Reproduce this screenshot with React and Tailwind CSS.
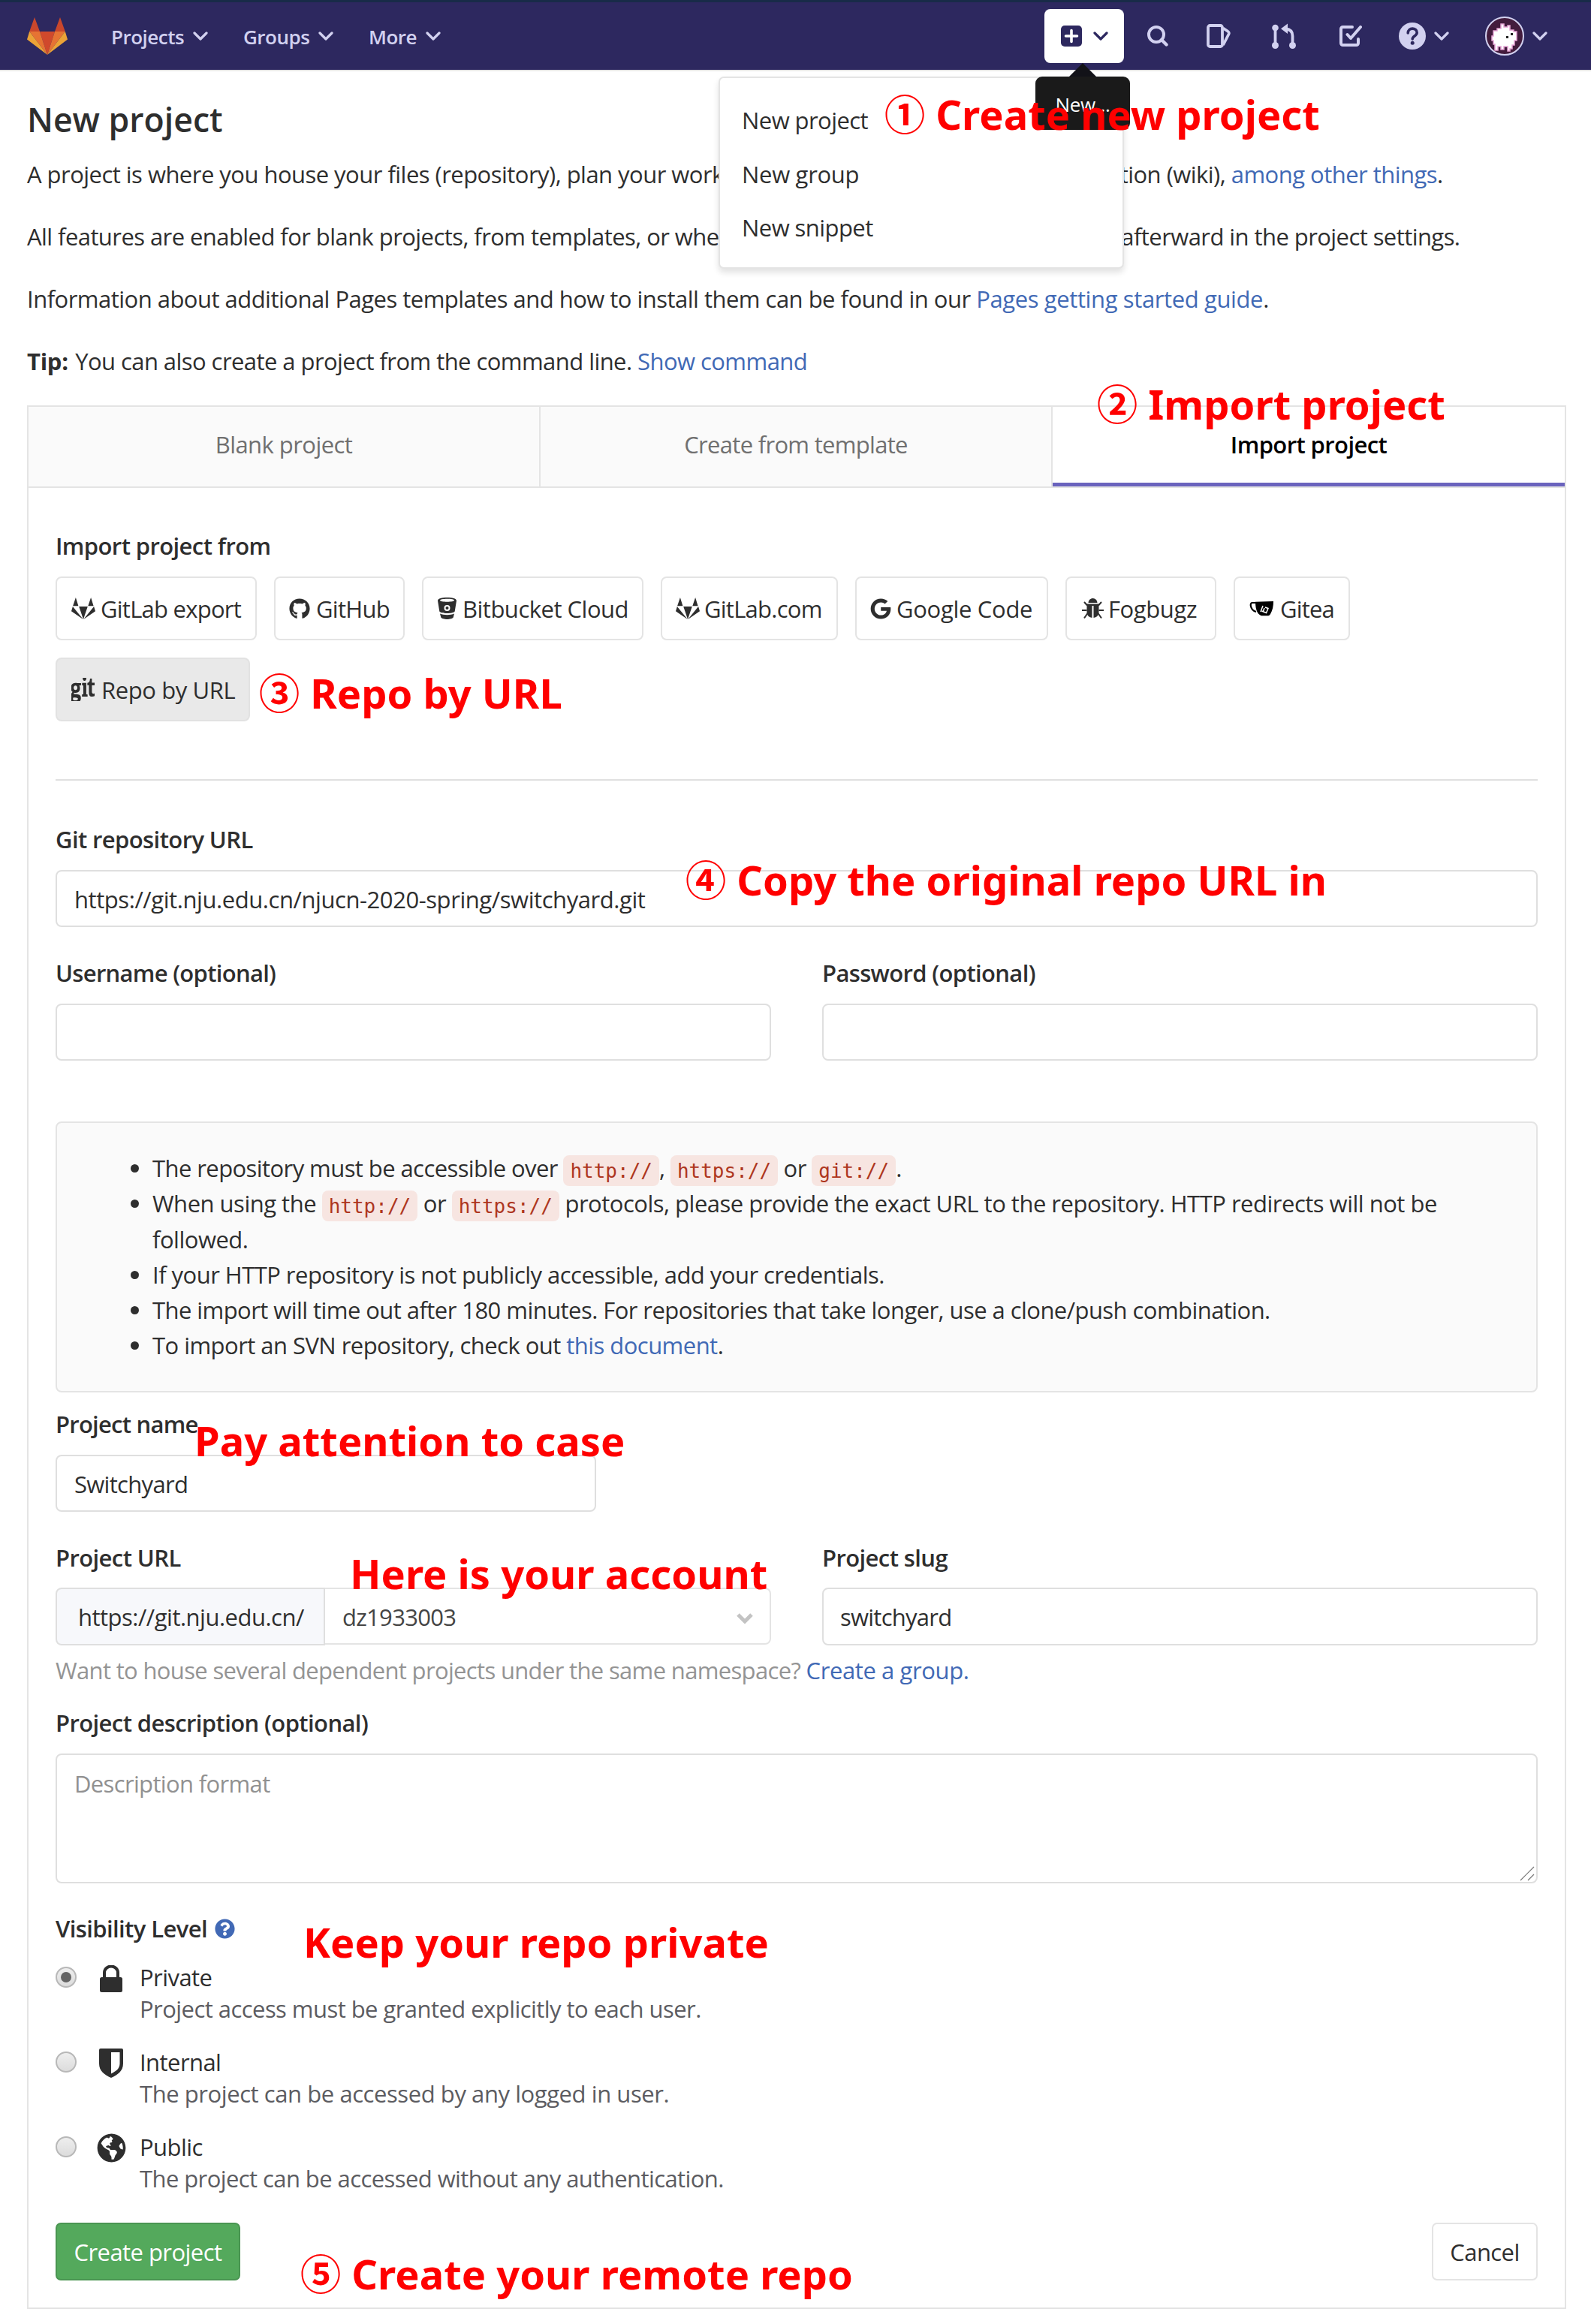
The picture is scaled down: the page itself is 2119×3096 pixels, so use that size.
import React from "react";
import { FaGithub, FaGoogle, FaGit, FaGlobeAmericas, FaQuestionCircle } from "react-icons/fa";

const Chevron = ({ className = "" }) => (
  <svg viewBox="0 0 20 12" fill="none" stroke="currentColor" strokeWidth="3.2" strokeLinecap="round" strokeLinejoin="round" className={`h-3 w-5 shrink-0 ${className}`}>
    <path d="M2 2l8 8 8-8" />
  </svg>
);

const Tanuki = () => (
  <svg viewBox="0 0 54 50" className="h-[50px] w-[54px] shrink-0">
    <path fill="#c9472c" d="M10 0L3.2 19H17zM44 0l6.800 19H37z" />
    <path fill="#d0492c" d="M17 19h20L27 50z" />
    <path fill="#e67333" d="M3.2 19H17l10 31zM50.800 19H37L27 50z" />
    <path fill="#eba337" d="M3.2 19L0 29.500 27 50zM50.800 19L54 29.500 27 50z" />
  </svg>
);

const GitlabMono = () => (
  <svg viewBox="0 0 32 29" fill="currentColor" className="h-[29px] w-8">
    <path d="M5.900 0L9.400 11.300H2.100zM26.100 0l3.500 11.300h-7.300zM10.200 12h11.600L16 29z" />
    <path d="M1.900 12L0 18.200 15.700 29zM30.100 12L32 18.200 16.300 29z" />
  </svg>
);

const Bucket = () => (
  <svg viewBox="0 0 25 29" fill="currentColor" className="h-[29px] w-[25px]">
    <path fillRule="evenodd" d="M12.500 0C19 0 25 1.300 25 4.200L22.700 18.500c-1 1.600-5 2.500-10.200 2.500s-9.200-.9-10.200-2.500L0 4.200C0 1.300 6 0 12.500 0zM12.500 1.800c-5 0-9.500.8-9.500 2s4.500 2 9.500 2 9.500-.8 9.500-2-4.500-2-9.500-2zM12.500 10a4 4 0 100 8 4 4 0 000-8z" />
    <circle cx="12.500" cy="14" r="2" />
    <path d="M3 21.500c5 2.200 14 2.200 19 0l-1.300 5c-1.800 3.300-14.600 3.300-16.400 0z" />
  </svg>
);

const Bug = () => (
  <svg viewBox="0 0 29 28" fill="none" stroke="currentColor" strokeWidth="2" className="h-7 w-[29px]">
    <path fill="currentColor" stroke="none" d="M8.500 6a6 6 0 0112 0zM6.500 7.500h16V19a8 8 0 01-7 7V10h-2v16a8 8 0 01-7-7z" />
    <path d="M7 9.500L3 5M22 9.500L26 5M6.500 16H0M22.500 16H29M7.500 20L3 26.500M21.500 20l4.500 6.500" />
  </svg>
);

const TeaCup = () => (
  <svg viewBox="0 0 32 20" className="h-5 w-8 text-black">
    <path d="M10 2H4C0 1.500 1 12 9 14" fill="none" stroke="currentColor" strokeWidth="2.200" />
    <path fill="currentColor" d="M8 .8L32 0c0 6-1 12-4 17-1.300 2.200-2.500 2.200-4 2.200h-8c-4-1-8-6-8-18.400z" />
    <path d="M18 6l-3 8M21 8l4 1.500-2.500 6-6-2.500M20 9l-1.500 4" fill="none" stroke="#fff" strokeWidth="1.500" />
  </svg>
);

const Lock = () => (
  <svg viewBox="0 0 30 36" className="h-9 w-[30px]">
    <path d="M6 18v-8a9 8.500 0 0118 0v8" fill="none" stroke="currentColor" strokeWidth="4" />
    <rect y="16" width="30" height="20" rx="2.500" fill="currentColor" />
  </svg>
);

const Shield = () => (
  <svg viewBox="0 0 32 39" className="h-[39px] w-8">
    <path fillRule="evenodd" fill="currentColor" d="M2 0h28q2 0 2 2v18c0 10-7 15-16 19C7 35 0 30 0 20V2q0-2 2-2zM16 5v28.500c7-3.500 11.500-7 11.500-13.500V5z" />
  </svg>
);

const SOURCES = [
  { icon: <GitlabMono />, label: "GitLab export", box: "w-[268px] pl-[19px]", slot: "w-[39px]", text: "tracking-[-0.75px]" },
  { icon: <FaGithub className="h-[28px] w-[28px]" />, label: "GitHub", box: "w-[174px] pl-[18px]", slot: "w-[36px]", text: "tracking-[-0.7px]" },
  { icon: <Bucket />, label: "Bitbucket Cloud", box: "w-[295px] pl-[19px]", slot: "w-[33px]", text: "tracking-[-0.5px]" },
  { icon: <GitlabMono />, label: "GitLab.com", box: "w-[236px] pl-[18px]", slot: "w-[38px]", text: "tracking-[-0.75px]" },
  { icon: <FaGoogle className="h-[28px] w-[28px]" />, label: "Google Code", box: "w-[257px] pl-[18px]", slot: "w-[35px]", text: "tracking-[-0.3px]" },
  { icon: <Bug />, label: "Fogbugz", box: "w-[201px] pl-[20px]", slot: "w-[35px]", text: "tracking-[-0.4px]" },
  { icon: <TeaCup />, label: "Gitea", box: "w-[155px] pl-[19px]", slot: "w-[41px]", text: "tracking-[-0.8px]" },
];

const LEVELS = [
  { name: "Private", text: "Project access must be granted explicitly to each user.", fit: "tracking-[-0.55px]", icon: <Lock />, on: true },
  { name: "Internal", text: "The project can be accessed by any logged in user.", fit: "tracking-[-0.43px]", icon: <Shield /> },
  { name: "Public", text: "The project can be accessed without any authentication.", fit: "tracking-[-0.58px]", icon: <FaGlobeAmericas className="h-[39px] w-[39px]" /> },
];

const Label = ({ children, className = "" }) => (
  <div className={`flex h-[47px] items-center pt-[2px] font-semibold tracking-[-0.6px] ${className}`}>{children}</div>
);
const Field = ({ children, className = "" }) => (
  <div className={`flex h-[76px] items-center rounded-[8px] border-2 border-[#dfdfdf] bg-white px-[23px] pt-[2px] ${className}`}>{children}</div>
);
const Link = ({ children, className = "" }) => <span className={`text-[#4169b5] ${className}`}>{children}</span>;
const Code = ({ children }) => (
  <code className="rounded-[8px] bg-[#f7e5e1] px-[9px] py-[5.5px] font-['DejaVu_Sans_Mono',monospace] text-[26px] leading-none tracking-normal text-[#ae3620]">{children}</code>
);
const Note = ({ num, children, className }) => (
  <div className={`absolute z-30 flex items-baseline whitespace-pre font-['Noto_Sans',sans-serif] text-[54.2px] leading-[54px] font-bold tracking-[0.04px] text-[#ff0000] ${className}`}>
    {num && <span className="mr-[14px] font-['Noto_Sans_CJK_SC',sans-serif]">{num}</span>}
    <span>{children}</span>
  </div>
);

function Header() {
  return (
    <header className="flex h-[95px] items-center border-t-[3px] border-b-2 border-t-[#182b48] border-b-[#e5e5e5] bg-[#2d285f] pr-[58px] pl-9 text-[26px] font-semibold tracking-[-0.5px] text-[#d2d1f0]">
      <Tanuki />
      <span className="ml-[58px] w-[101px] pt-[2px]">Projects</span>
      <Chevron className="ml-[8px]" />
      <span className="ml-[47px] w-[92px] pt-[2px]">Groups</span>
      <Chevron className="ml-[8px]" />
      <span className="ml-[47px] w-[68px] pt-[2px]">More</span>
      <Chevron className="ml-[8px]" />

      <div className="ml-auto flex items-center">
        <div className="relative flex h-[72px] w-[106px] items-center rounded-[8px] bg-white pl-[22px] text-[#2d285f]">
          <svg viewBox="0 0 28 28" className="h-7 w-7">
            <rect width="28" height="28" rx="5" fill="currentColor" />
            <path d="M14 6.500v15M6.500 14h15" stroke="#fff" strokeWidth="3.600" strokeLinecap="round" />
          </svg>
          <Chevron className="ml-[15px]" />
        </div>
        <svg viewBox="0 0 28 28" fill="none" stroke="currentColor" strokeWidth="4" className="ml-[31px] h-7 w-7">
          <circle cx="12" cy="12" r="10" />
          <path d="M19 19l6.500 6.500" strokeLinecap="round" strokeWidth="4.400" />
        </svg>
        <svg viewBox="0 0 32 32" fill="none" stroke="currentColor" strokeWidth="3.800" strokeLinejoin="round" className="ml-[51px] h-8 w-8">
          <rect x="2" y="2" width="19" height="28" rx="2.500" />
          <path d="M22 5.500l6 4c1.800 1.200 2.200 2.500 1.500 4L22 28" />
        </svg>
        <svg viewBox="0 0 32 34" fill="none" stroke="currentColor" strokeWidth="3.800" className="ml-[55px] h-[34px] w-8">
          <path d="M4.500 6v24M27.500 29V17c0-6-3-9-9-9.500" />
          <circle cx="4.500" cy="6" r="4.300" fill="currentColor" stroke="none" />
          <circle cx="4.500" cy="29.500" r="4.500" fill="currentColor" stroke="none" />
          <circle cx="27.500" cy="29.500" r="4.500" fill="currentColor" stroke="none" />
          <path d="M21 .5v13.500L12 7.200z" fill="currentColor" stroke="none" />
        </svg>
        <svg viewBox="0 0 30 28" fill="none" stroke="currentColor" strokeWidth="4" strokeLinecap="round" strokeLinejoin="round" className="ml-[58px] h-7 w-[30px]">
          <path d="M17 2H4.500A2.500 2.500 0 002 4.500v19A2.500 2.500 0 004.500 26h18a2.500 2.500 0 002.500-2.500V18" />
          <path d="M10.500 12l4.500 5L28 2" />
        </svg>
        <svg viewBox="0 0 36 36" fill="none" className="ml-[49px] h-9 w-9">
          <circle cx="18" cy="18" r="18" fill="currentColor" />
          <path d="M12.200 14c0-8 12-7.500 12-.5 0 4.500-6 4.500-6 8.500" stroke="#2d285f" strokeWidth="3.600" strokeLinecap="round" />
          <circle cx="18.200" cy="27.200" r="2.500" fill="#2d285f" />
        </svg>
        <Chevron className="ml-[11px]" />
        <svg viewBox="0 0 52 52" className="ml-[48px] h-[52px] w-[52px]">
          <circle cx="26" cy="26" r="25" fill="#431c3d" stroke="#d2d1f0" strokeWidth="2" />
          <path d="M11 19h5v-3h5v-6h4v4h5v-2h3v6h5v2h4v12h-3v6h-3v5h-3v3h-3v-6h-5v4h-4v-4h-4v5h-4v-8h-2v-5h-2v-6h2z" fill="#fff" stroke="#e7a5d6" strokeWidth="1.500" />
          <path d="M34 22h3v3h-3zM28 26h3v3h-3z" fill="#222" />
        </svg>
        <Chevron className="ml-[11px]" />
      </div>
    </header>
  );
}

function NewMenu() {
  return (
    <>
      <div className="absolute top-[102px] left-[957px] z-10 flex h-[256px] w-[540px] flex-col rounded-[7px] border-2 border-[#e4e4e4] bg-white pt-[21px] pl-[29px] shadow-[0_5px_9px_rgba(0,0,0,0.12)]">
        <div className="flex h-[71.6px] items-center">New project</div>
        <div className="flex h-[71.6px] items-center tracking-[-0.3px]">New group</div>
        <div className="flex h-[71.6px] items-center">New snippet</div>
      </div>
      <div className="absolute top-[84px] left-[1379px] z-20 flex flex-col items-center">
        <svg viewBox="0 0 36 18" className="h-[18px] w-9 text-[#121218]"><path d="M18 0l18 18H0z" fill="currentColor" /></svg>
        <div className="flex h-[71px] w-[126px] items-center justify-center rounded-[9px] bg-[#1a1a1a] pt-[3px] text-[26px] tracking-[-0.3px] text-white">New...</div>
      </div>
    </>
  );
}

export default function App() {
  return (
    <div className="relative h-[3096px] w-[2119px] overflow-hidden bg-white font-['Open_Sans',sans-serif] text-[31px] leading-[47px] tracking-[-0.56px] whitespace-nowrap text-[#2e2e2e]">
      <Header />
      <NewMenu />

      <section className="h-[445px] px-9 pt-[34px]">
        <h1 className="h-[80px] text-[44.6px] leading-[60px] font-semibold tracking-normal">New project</h1>
        <p className="mb-[36px] tracking-[-0.53px]">A project is where you house your files (repository), plan your work (issues), and publish your documentation (wiki), <Link>among other things</Link>.</p>
        <p className="mb-[36px] tracking-[-0.57px]">All features are enabled for blank projects, from templates, or when importing, but you can disable them afterward in the project settings.</p>
        <p className="mb-[36px] tracking-[-0.52px]">Information about additional Pages templates and how to install them can be found in our <Link className="tracking-[-0.38px]">Pages getting started guide</Link>.</p>
        <p className="tracking-[-0.56px]"><b className="mr-[2px] tracking-[-0.3px]">Tip:</b> You can also create a project from the command line. <Link>Show command</Link></p>
      </section>

      <main className="mr-[33px] ml-9 border-2 border-[#e4e4e4]">
        <div className="grid h-[108px] grid-cols-3 border-b-2 border-[#e4e4e4] text-[#707070]">
          <div className="flex items-center justify-center border-r-2 border-[#e4e4e4] bg-[#fafafa] pb-[5px]">Blank project</div>
          <div className="flex items-center justify-center border-r-2 border-[#e4e4e4] bg-[#fafafa] pb-[5px] tracking-[-0.7px]">Create from template</div>
          <div className="flex items-center justify-center border-b-[5px] border-[#6a63bd] font-semibold tracking-[-0.6px] text-black">Import project</div>
        </div>

        <div className="flex flex-col px-9 pt-[53px] pb-[36px]">
          <Label>Import project from</Label>
          <div className="mt-[18px] flex flex-wrap gap-[23px]">
            {SOURCES.map((s) => (
              <div key={s.label} className={`flex h-[85px] items-center rounded-[8px] border-2 border-[#e4e4e4] ${s.box}`}>
                <span className={`flex shrink-0 ${s.slot}`}>{s.icon}</span>
                <span className={`pt-[2px] ${s.text}`}>{s.label}</span>
              </div>
            ))}
            <div className="flex h-[85px] w-[259px] items-center rounded-[8px] border-2 border-[#e2e2e2] bg-[#e9e9e9] pl-[19px]">
              <span className="w-[40px] shrink-0"><FaGit preserveAspectRatio="none" viewBox="16 76 480 360" className="mb-[1px] h-[31px] w-[31px]" /></span>
              <span className="pt-[2px] tracking-[-0.4px]">Repo by URL</span>
            </div>
          </div>

          <div className="mt-[77px] h-[2px] bg-[#e0e0e0]" />

          <Label className="mt-[54px]">Git repository URL</Label>
          <Field className="mt-[18px] tracking-[-0.43px]">https://git.nju.edu.cn/njucn-2020-spring/switchyard.git</Field>

          <div className="mt-[37px] grid grid-cols-2 gap-x-[68px] gap-y-[18px]">
            <Label><span className="tracking-[-0.7px]">Username (optional)</span></Label>
            <Label><span className="tracking-[-0.65px]">Password (optional)</span></Label>
            <Field />
            <Field />
          </div>

          <div className="mt-[81px] h-[361px] rounded-[8px] border-2 border-[#e4e4e4] bg-[#fafafa] pt-[37px]">
            <ul className="list-disc pl-[127px] leading-[47.3px] tracking-[-0.58px]">
              <li>The repository must be accessible over <Code>http://</Code>, <Code>https://</Code> or <Code>git://</Code>.</li>
              <li className="tracking-[-0.5px]">When using the <Code>http://</Code> or <Code>https://</Code> protocols, please provide the exact URL to the repository. HTTP redirects will not be<br />followed.</li>
              <li className="tracking-[-0.53px]">If your HTTP repository is not publicly accessible, add your credentials.</li>
              <li className="tracking-[-0.56px]">The import will time out after 180 minutes. For repositories that take longer, use a clone/push combination.</li>
              <li className="tracking-[-0.54px]">To import an SVN repository, check out <Link>this document</Link>.</li>
            </ul>
          </div>

          <Label className="mt-[18px]"><span className="tracking-[-0.75px]">Project name</span></Label>
          <Field className="mt-[18px] w-[720px]"><span className="tracking-[-0.7px]">Switchyard</span></Field>

          <div className="mt-[37px] grid grid-cols-2 gap-x-[68px] gap-y-[17px]">
            <Label>Project URL</Label>
            <Label>Project slug</Label>
            <div className="flex h-[77px]">
              <div className="flex w-[359px] items-center rounded-l-[8px] border-2 border-[#dfdfdf] bg-[#f7f8fb] pt-[2px] pl-[28px] tracking-[-0.5px]">https://git.nju.edu.cn/</div>
              <div className="flex h-[76px] flex-1 items-center justify-between rounded-r-[8px] border-2 border-l-0 border-[#e4e4e4] pt-[2px] pr-[22px] pl-[23px] tracking-[-0.7px] text-[#454545]">
                dz1933003
                <svg viewBox="0 0 22 14" fill="none" stroke="#c3c3c3" strokeWidth="5" className="mt-[4px] h-[14px] w-[22px]"><path d="M2 2l9 9 9-9" /></svg>
              </div>
            </div>
            <Field className="min-h-[77px]"><span className="-ml-px tracking-[-0.75px]">switchyard</span></Field>
          </div>
          <div className="mt-[10px] tracking-[-0.66px] text-[#949494]">Want to house several dependent projects under the same namespace? <Link className="tracking-[-0.4px]">Create a group.</Link></div>

          <Label className="mt-[22px]">Project description (optional)</Label>
          <div className="relative mt-[18px] h-[173px] rounded-[8px] border-2 border-[#dfdfdf] px-[23px] pt-[15px] tracking-[-0.65px] text-[#919191]">
            Description format
            <svg viewBox="0 0 20 20" className="absolute right-[2px] bottom-[1px] h-5 w-5" stroke="#777" strokeWidth="1.200"><path d="M1 19L19 1M11 19l8-8" /></svg>
          </div>

          <Label className="mt-[36px]">
            Visibility Level
            <FaQuestionCircle className="ml-[10px] h-[27px] w-[27px] text-[#4169b5]" />
          </Label>
          <div className="mt-[20px]">
            {LEVELS.map((l) => (
              <div key={l.name} className="flex h-[113px] leading-[43.5px]">
                <span className="mt-[8px] flex h-7 w-7 items-center justify-center rounded-full border-2 border-[#b8b8b8] bg-linear-to-b from-[#eeeeee] to-[#dcdcdc]">
                  {l.on && <span className="h-[14px] w-[14px] rounded-full bg-[#646464]" />}
                </span>
                <span className="mt-[4px] ml-[26px] flex h-[39px] w-[40px] items-center justify-center">{l.icon}</span>
                <div className="ml-[18px]">
                  <div className="h-[43px] leading-[45px]">{l.name}</div>
                  <div className={`text-[#5c5c61] ${l.fit}`}>{l.text}</div>
                </div>
              </div>
            ))}
          </div>

          <div className="mt-[10px] flex h-[77px] justify-between">
            <div className="flex w-[246px] items-center justify-center rounded-[7px] border-2 border-[#4a9552] bg-[#54a95c] pt-px text-white">Create project</div>
            <div className="flex w-[141px] items-center justify-center rounded-[7px] border-2 border-[#e4e4e4] pt-px">Cancel</div>
          </div>
        </div>
      </main>

      <Note num="①" className="top-[123px] left-[1178px]">Create new project</Note>
      <Note num="②" className="top-[509px] left-[1461px]">Import project</Note>
      <Note num="③" className="top-[894px] left-[345px]">Repo by URL</Note>
      <Note num="④" className="top-[1143px] left-[913px]">Copy the original repo URL in</Note>
      <Note className="top-[1892px] left-[259px]">Pay attention to case</Note>
      <Note className="top-[2069px] left-[466px]">Here is your account</Note>
      <Note className="top-[2560px] left-[404px]">Keep your repo private</Note>
      <Note num="⑤" className="top-[3000px] left-[400px]">Create your remote repo</Note>
    </div>
  );
}
